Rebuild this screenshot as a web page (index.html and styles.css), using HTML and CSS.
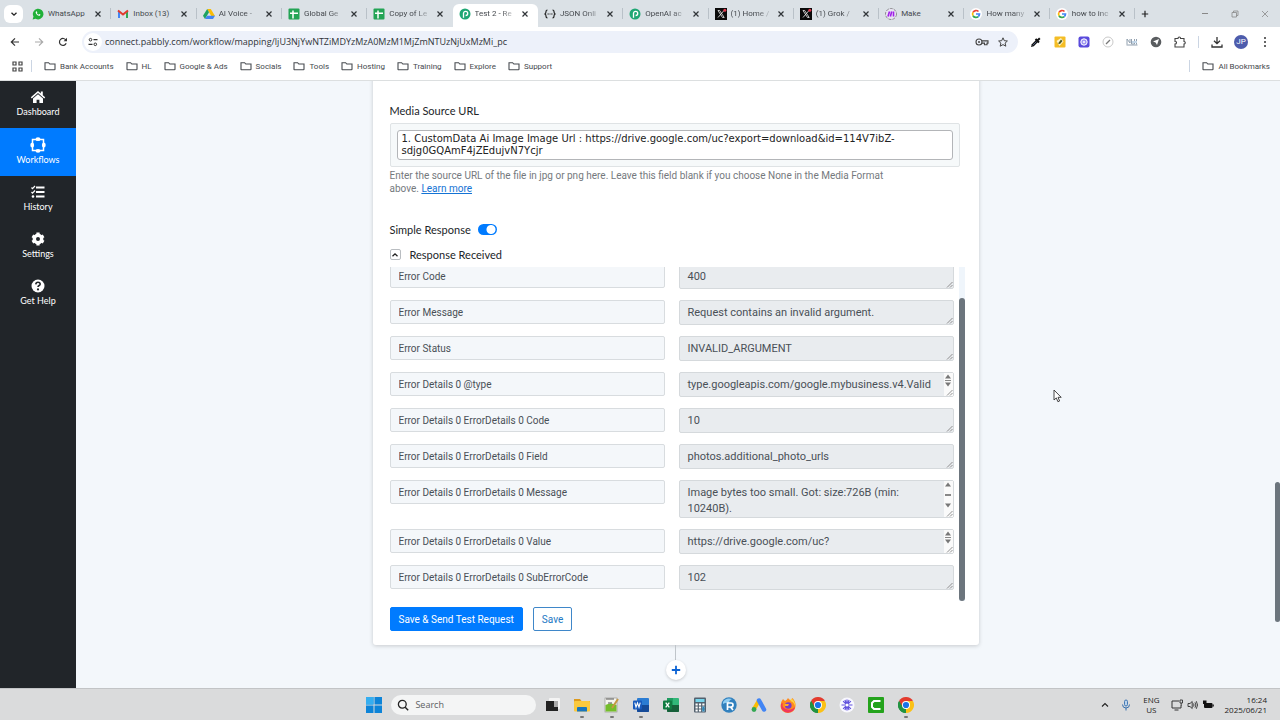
FILE: index.html
```html
<!DOCTYPE html>
<html lang="en">
<head>
<meta charset="utf-8">
<title>Test 2 - Response</title>
<link rel="stylesheet" href="styles.css">
</head>
<body>
<svg class="defs" aria-hidden="true">
  <symbol id="x" viewBox="0 0 8 8"><path d="M1.5 1.5l5 5M6.500 1.500l-5 5" stroke="currentColor" stroke-width="1.200" fill="none"/></symbol>
  <symbol id="folder" viewBox="0 0 12 10"><path d="M1 8.200V1.700h3.600l1.200 1.300H11v5.200q0 .6-.6.6H1.600q-.6 0-.6-.6z" fill="none" stroke="#474b50" stroke-width="1.100"/></symbol>
  <symbol id="sheet" viewBox="0 0 12 12"><rect width="11" height="11" x=".5" y=".5" rx="1" fill="#23a455"/><path d="M5 2.500v8M2 5.200h8" stroke="#fff" stroke-width="1.500"/></symbol>
  <symbol id="pabbly" viewBox="0 0 12 12"><circle cx="6" cy="6" r="5.500" fill="#1fa774"/><path d="M4.500 9.800V5.400a2.100 2.100 0 1 1 2.100 2.100" fill="none" stroke="#fff" stroke-width="1.300"/></symbol>
  <symbol id="xcom" viewBox="0 0 12 12"><rect width="12" height="12" fill="#0b0b0b"/><path d="M3 2.500h1.700L9.200 9.500H7.500zM9 2.500L3 9.500" fill="none" stroke="#eee" stroke-width=".8"/><circle cx="9.800" cy="2.300" r="1.500" fill="#e0364c"/></symbol>
  <symbol id="google" viewBox="0 0 12 12"><circle cx="6" cy="6" r="6" fill="#fff"/><g fill="none" stroke-width="1.700"><path d="M3 4.300A3.500 3.500 0 0 1 8.500 3.500" stroke="#ea4335"/><path d="M3 4.300A3.500 3.500 0 0 0 3 7.700" stroke="#fbbc05"/><path d="M3 7.700A3.500 3.500 0 0 0 8.300 8.600" stroke="#34a853"/><path d="M6 6h3.500A3.500 3.500 0 0 1 8.300 8.600" stroke="#4285f4"/></g></symbol>
  <symbol id="chrome" viewBox="0 0 16 16"><path d="M8 8L1.070 4A8 8 0 0 1 14.930 4z" fill="#e33b2e"/><path d="M8 8L14.930 4A8 8 0 0 1 8 16z" fill="#fbc116"/><path d="M8 8V16A8 8 0 0 1 1.070 4z" fill="#229342"/><path d="M8 4h6.930l-3.400 6z" fill="#fbc116"/><path d="M4.500 10L1.070 4 8 4z" fill="#e33b2e"/><path d="M1.070 4l3.430 6L8 12v4A8 8 0 0 1 1.070 4z" fill="#229342"/><circle cx="8" cy="8" r="4" fill="#fff"/><circle cx="8" cy="8" r="3.100" fill="#1a73e8"/></symbol>
  <symbol id="grip" viewBox="0 0 7 7"><path d="M1 6.500L6.500 1M4 6.500L6.500 4" stroke="#777" stroke-width=".8"/></symbol>
  <symbol id="up" viewBox="0 0 8 5"><path d="M4 .5L7 4.500H1z" fill="#777"/></symbol>
  <symbol id="down" viewBox="0 0 8 5"><path d="M4 4.500L7 .5H1z" fill="#777"/></symbol>
</svg>

<header class="browser">
  <div class="tabstrip">
    <button class="tab-search" aria-label="Search tabs"><svg width="8" height="8" viewBox="0 0 8 8"><path d="M1.500 2.700L4 5.200l2.500-2.500" fill="none" stroke="#222" stroke-width="1.300"/></svg></button>
    <div class="tabs">
      <div class="tab"><svg class="fav" viewBox="0 0 12 12"><path d="M.6 11.500l.9-2.900A5.300 5.300 0 1 1 3.600 10.700z" fill="#20b038"/><path d="M4 3.400q-1 1 .5 2.800t3.300 1.600l.8-1-1.400-.8-.6.700q-1.300-.6-1.800-1.700l.6-.6-.6-1.200z" fill="#fff"/></svg><span>WhatsApp</span><button aria-label="Close tab"><svg><use href="#x"/></svg></button></div>
      <div class="tab"><svg class="fav" viewBox="0 0 12 12"><path d="M1 2v8h2V5z" fill="#4285f4"/><path d="M11 2v8H9V5z" fill="#34a853"/><path d="M1 2.500L6 6.500l5-4" fill="none" stroke="#e33b2e" stroke-width="2.100"/></svg><span>Inbox (13)</span><button aria-label="Close tab"><svg><use href="#x"/></svg></button></div>
      <div class="tab"><svg class="fav" viewBox="0 0 12 12"><path d="M4.200 1h3.600L12 8H8.200z" fill="#fbbc04"/><path d="M4.200 1L6 4.300 2 11 0 7.800z" fill="#1ea362"/><path d="M2 11l2-3.300h8L10 11z" fill="#4285f4"/></svg><span>AI Voice -</span><button aria-label="Close tab"><svg><use href="#x"/></svg></button></div>
      <div class="tab"><svg class="fav"><use href="#sheet"/></svg><span>Global Ge</span><button aria-label="Close tab"><svg><use href="#x"/></svg></button></div>
      <div class="tab"><svg class="fav"><use href="#sheet"/></svg><span>Copy of Le</span><button aria-label="Close tab"><svg><use href="#x"/></svg></button></div>
      <div class="tab active"><svg class="fav"><use href="#pabbly"/></svg><span>Test 2 - Re</span><button aria-label="Close tab"><svg><use href="#x"/></svg></button></div>
      <div class="tab"><svg class="fav" viewBox="0 0 12 12"><path d="M3.500 2Q2 2 2 3.500T1 6q1 .5 1 2.200T3.500 10M8.500 2Q10 2 10 3.500T11 6q-1 .5-1 2.200T8.500 10M3.500 6h1.300M5.500 6h1M7.200 6h1.300" fill="none" stroke="#222" stroke-width="1.200"/></svg><span>JSON Onli</span><button aria-label="Close tab"><svg><use href="#x"/></svg></button></div>
      <div class="tab"><svg class="fav"><use href="#pabbly"/></svg><span>OpenAI ac</span><button aria-label="Close tab"><svg><use href="#x"/></svg></button></div>
      <div class="tab"><svg class="fav"><use href="#xcom"/></svg><span>(1) Home /</span><button aria-label="Close tab"><svg><use href="#x"/></svg></button></div>
      <div class="tab"><svg class="fav"><use href="#xcom"/></svg><span>(1) Grok /</span><button aria-label="Close tab"><svg><use href="#x"/></svg></button></div>
      <div class="tab"><svg class="fav" viewBox="0 0 12 12"><circle cx="6" cy="6" r="5.500" fill="#e9e4f3" stroke="#777" stroke-width=".8" stroke-dasharray="3 1"/><path d="M3 8.500L4.500 3.500M5.400 8.500L6.700 3.500M8.500 3.500v5" stroke="#a020e8" stroke-width="1.600"/></svg><span>Make</span><button aria-label="Close tab"><svg><use href="#x"/></svg></button></div>
      <div class="tab"><svg class="fav"><use href="#google"/></svg><span>How many</span><button aria-label="Close tab"><svg><use href="#x"/></svg></button></div>
      <div class="tab"><svg class="fav"><use href="#google"/></svg><span>how to inc</span><button aria-label="Close tab"><svg><use href="#x"/></svg></button></div>
    </div>
    <button class="new-tab" aria-label="New tab"><svg width="8" height="8" viewBox="0 0 8 8"><path d="M4 .8v6.400M.8 4h6.400" stroke="#222" stroke-width="1.200"/></svg></button>
    <div class="window-buttons">
      <button aria-label="Minimize"><svg width="8" height="8" viewBox="0 0 8 8"><path d="M1 3.500h6" stroke="#888"/></svg></button>
      <button aria-label="Restore"><svg width="8" height="8" viewBox="0 0 8 8"><path d="M1 2.500h4.500V7H1zM2.500 2.500V1H7v4.500H5.500" fill="none" stroke="#888" stroke-width=".8"/></svg></button>
      <button aria-label="Close"><svg width="8" height="8" viewBox="0 0 8 8"><path d="M1 1l6 6M7 1L1 7" stroke="#888" stroke-width=".8"/></svg></button>
    </div>
  </div>

  <div class="toolbar">
    <div class="nav">
      <button aria-label="Back"><svg width="10" height="10" viewBox="0 0 10 10"><path d="M9 5H1.500M5 1.300L1.300 5 5 8.700" fill="none" stroke="#333" stroke-width="1.200"/></svg></button>
      <button aria-label="Forward"><svg width="10" height="10" viewBox="0 0 10 10"><path d="M1 5h7.500M5 1.300L8.700 5 5 8.700" fill="none" stroke="#aaa" stroke-width="1.200"/></svg></button>
      <button aria-label="Reload"><svg width="10" height="10" viewBox="0 0 10 10"><path d="M8.200 6.300A3.500 3.500 0 1 1 8 3.200" fill="none" stroke="#333" stroke-width="1.200"/><path d="M9 .8v3.400H5.600z" fill="#333"/></svg></button>
    </div>
    <div class="omnibox">
      <button class="site-info" aria-label="Site information"><svg width="10" height="10" viewBox="0 0 10 10"><path d="M5.500 2.700H9.500M.5 7.300h4" stroke="#333" stroke-width="1.200"/><circle cx="2.500" cy="2.700" r="1.300" fill="none" stroke="#333"/><circle cx="7.300" cy="7.300" r="1.300" fill="none" stroke="#333"/></svg></button>
      <input type="text" aria-label="Address" value="connect.pabbly.com/workflow/mapping/ljU3NjYwNTZiMDYzMzA0MzM1MjZmNTUzNjUxMzMi_pc">
      <button aria-label="Passwords"><svg width="14" height="10" viewBox="0 0 14 10"><circle cx="4" cy="5" r="3" fill="none" stroke="#444" stroke-width="1.100"/><circle cx="4" cy="5" r="1" fill="#444"/><path d="M6.800 3.900H13v2.200h-1v1.700H9.500V6.100H6.800" fill="none" stroke="#444" stroke-width="1.100"/></svg></button>
      <button aria-label="Bookmark"><svg width="10" height="10" viewBox="0 0 10 10"><path d="M5 .8l1.300 2.900 3.100.3-2.300 2.100.7 3.100L5 7.600 2.200 9.200l.7-3.100L.6 4l3.100-.3z" fill="none" stroke="#444"/></svg></button>
    </div>
    <div class="extensions">
      <button aria-label="Color picker"><svg width="12" height="12" viewBox="0 0 12 12"><path d="M1 11l.8-2.800L6.200 3.800 8.200 5.800 3.800 10.200z" fill="#111"/><path d="M5.500 3l3.500 3.500M7.500 4.500L9.800 2.200" stroke="#111" stroke-width="2"/><path d="M2.700 9.300L6.400 5.600" stroke="#6a7fae" stroke-width=".7"/></svg></button>
      <button aria-label="Design extension"><svg width="12" height="12" viewBox="0 0 12 12"><rect x=".5" y=".5" width="11" height="11" rx="1" fill="#f4bd25"/><path d="M2.500 5L7 2l2.500 3.500-4 4.500z" fill="#fff5cd"/><path d="M4 7.500l3-4 1.500 1.500-2.500 3z" fill="#4f5c24"/></svg></button>
      <button aria-label="Recorder"><svg width="12" height="12" viewBox="0 0 12 12"><rect x=".5" y=".5" width="11" height="11" rx="2" fill="#5a4bdc"/><circle cx="6" cy="6" r="3.200" fill="#9f98f2" stroke="#fff"/><circle cx="6" cy="6" r="1" fill="#fff"/></svg></button>
      <button aria-label="Notes"><svg width="12" height="12" viewBox="0 0 12 12"><circle cx="6" cy="6" r="5" fill="#fff" stroke="#bbb" stroke-width=".8"/><path d="M4 8l4-4" stroke="#777" stroke-width="1.200"/></svg></button>
      <button aria-label="Metrics"><svg width="12" height="12" viewBox="0 0 12 12"><path d="M1 8.500V3l3 4V3M5.500 3v5h3V3M10.500 3v5.500M.5 9h11" fill="none" stroke="#91a0af"/><path d="M6 6h5" stroke="#c3d6e8" stroke-width="2"/></svg></button>
      <button aria-label="Send"><svg width="12" height="12" viewBox="0 0 12 12"><circle cx="6" cy="6" r="5.300" fill="#5a5d60"/><path d="M9 3L7 9 5.600 6.500 3 5.500z" fill="#fff"/></svg></button>
      <button aria-label="Extensions"><svg width="12" height="12" viewBox="0 0 12 12"><path d="M1 2.500h3q0-1.500 1.300-1.500t1.300 1.500H10v3q1.300.1 1.300 1.300T10 8.100V11H1V8q1.500 0 1.500-1.300T1 5.500z" fill="none" stroke="#444" stroke-width="1.100"/></svg></button>
      <i class="rule"></i>
      <button aria-label="Downloads"><svg width="12" height="12" viewBox="0 0 12 12"><path d="M6 1v6M3 4.700l3 3 3-3M1 8.500V11h10V8.500" fill="none" stroke="#333" stroke-width="1.300"/></svg></button>
      <button class="avatar">JP</button>
      <button aria-label="Menu"><svg width="12" height="12" viewBox="0 0 12 12"><g fill="#333"><circle cx="6" cy="2" r="1"/><circle cx="6" cy="6" r="1"/><circle cx="6" cy="10" r="1"/></g></svg></button>
    </div>
  </div>

  <nav class="bookmarks">
    <button class="apps" aria-label="Apps"><svg width="11" height="11" viewBox="0 0 11 11"><path d="M1 1h3v3H1zM7 1h3v3H7zM1 7h3v3H1zM7 7h3v3H7z" fill="none" stroke="#444" stroke-width="1.200"/></svg></button>
    <i class="rule"></i>
    <a href="#"><svg><use href="#folder"/></svg>Bank Accounts</a>
    <a href="#"><svg><use href="#folder"/></svg>HL</a>
    <a href="#"><svg><use href="#folder"/></svg>Google &amp; Ads</a>
    <a href="#"><svg><use href="#folder"/></svg>Socials</a>
    <a href="#"><svg><use href="#folder"/></svg>Tools</a>
    <a href="#"><svg><use href="#folder"/></svg>Hosting</a>
    <a href="#"><svg><use href="#folder"/></svg>Training</a>
    <a href="#"><svg><use href="#folder"/></svg>Explore</a>
    <a href="#"><svg><use href="#folder"/></svg>Support</a>
    <i class="rule push"></i>
    <a href="#"><svg><use href="#folder"/></svg>All Bookmarks</a>
  </nav>
</header>

<div class="app">
  <nav class="sidebar">
    <a href="#"><svg viewBox="0 0 16 16"><path d="M8 2L.8 8.300l1 1.100L8 4.100l6.200 5.300 1-1.100-2.400-2.100V2.500h-2v2z" fill="#fff"/><path d="M3 9.400L8 5.200l5 4.200V14H9.400v-3.300H6.600V14H3z" fill="#fff"/></svg>Dashboard</a>
    <a href="#" class="current"><svg viewBox="0 0 16 16"><rect x="2.500" y="2.500" width="11" height="11" fill="none" stroke="#fff" stroke-width="1.500"/><g fill="#fff"><ellipse cx="8" cy="2.200" rx="2.500" ry="1.900"/><ellipse cx="8" cy="13.800" rx="2.500" ry="1.900"/><ellipse cx="2.200" cy="8" rx="1.900" ry="2.500"/><ellipse cx="13.800" cy="8" rx="1.900" ry="2.500"/></g></svg>Workflows</a>
    <a href="#"><svg viewBox="0 0 16 16"><path d="M6 3.500h8.500M6 8h8.500M6 12.500h8.500" stroke="#fff" stroke-width="1.800"/><path d="M1.500 3.500l1 1.200L5 2M1.500 8l1 1.200L5 6.500" fill="none" stroke="#fff" stroke-width="1.200"/><circle cx="3" cy="12.500" r="1.300" fill="#fff"/></svg>History</a>
    <a href="#"><svg viewBox="0 0 16 16"><circle cx="8" cy="8" r="3.700" fill="none" stroke="#fff" stroke-width="3.400"/><path d="M8 1.500v3M8 11.500v3M2.400 4.800l2.500 1.500M11.100 9.700l2.500 1.500M2.400 11.200l2.500-1.500M11.100 6.300l2.500-1.500" stroke="#fff" stroke-width="3.200"/></svg>Settings</a>
    <a href="#"><svg viewBox="0 0 16 16"><circle cx="8" cy="8" r="6.500" fill="#fff"/><path d="M5.800 6.300Q6 4.200 8 4.200t2.200 1.700q0 1-1.100 1.600T8 9" fill="none" stroke="#212529" stroke-width="1.600"/><circle cx="8" cy="11.400" r="1.100" fill="#212529"/></svg>Get Help</a>
  </nav>

  <main class="canvas">
    <section class="card">
      <p class="hint">Select the way of attaching media.</p>
      <label class="field-label" for="media">Media Source URL</label>
      <div class="mapped"><textarea id="media" rows="2" readonly>1. CustomData Ai Image Image Url : https://drive.google.com/uc?export=download&amp;id=114V7ibZ-sdjg0GQAmF4jZEdujvN7Ycjr</textarea></div>
      <p class="hint">Enter the source URL of the file in jpg or png here. Leave this field blank if you choose None in the Media Format above. <a href="#">Learn more</a></p>
      <div class="toggle"><label for="simple">Simple Response</label><input type="checkbox" role="switch" id="simple" checked></div>
      <div class="received"><button aria-label="Collapse"><svg width="8" height="8" viewBox="0 0 8 8"><path d="M1.500 5.300L4 2.800l2.500 2.500" fill="none" stroke="#222" stroke-width="1.300"/></svg></button>Response Received</div>
      <div class="response">
        <div class="rows">
          <div class="row"><input aria-label="Key" value="Error Code" readonly><div class="value"><textarea aria-label="Error Code" readonly>400</textarea><svg class="grip"><use href="#grip"/></svg></div></div>
          <div class="row"><input aria-label="Key" value="Error Message" readonly><div class="value"><textarea aria-label="Error Message" readonly>Request contains an invalid argument.</textarea><svg class="grip"><use href="#grip"/></svg></div></div>
          <div class="row"><input aria-label="Key" value="Error Status" readonly><div class="value"><textarea aria-label="Error Status" readonly>INVALID_ARGUMENT</textarea><svg class="grip"><use href="#grip"/></svg></div></div>
          <div class="row"><input aria-label="Key" value="Error Details 0 @type" readonly><div class="value scrolls"><textarea aria-label="Error type" readonly>type.googleapis.com/google.mybusiness.v4.ValidationError</textarea><span class="mini"><svg><use href="#up"/></svg><i></i><svg><use href="#down"/></svg></span><svg class="grip"><use href="#grip"/></svg></div></div>
          <div class="row"><input aria-label="Key" value="Error Details 0 ErrorDetails 0 Code" readonly><div class="value"><textarea aria-label="Code" readonly>10</textarea><svg class="grip"><use href="#grip"/></svg></div></div>
          <div class="row"><input aria-label="Key" value="Error Details 0 ErrorDetails 0 Field" readonly><div class="value"><textarea aria-label="Field" readonly>photos.additional_photo_urls</textarea><svg class="grip"><use href="#grip"/></svg></div></div>
          <div class="row"><input aria-label="Key" value="Error Details 0 ErrorDetails 0 Message" readonly><div class="value scrolls tall"><textarea aria-label="Message" readonly>Image bytes too small. Got: size:726B (min: 10240B).</textarea><span class="mini"><svg><use href="#up"/></svg><i></i><svg><use href="#down"/></svg></span><svg class="grip"><use href="#grip"/></svg></div></div>
          <div class="row"><input aria-label="Key" value="Error Details 0 ErrorDetails 0 Value" readonly><div class="value scrolls"><textarea aria-label="Value" readonly>https://drive.google.com/uc?export=download&amp;id=114V7ibZ-sdjg0GQAmF4jZEdujvN7Ycjr</textarea><span class="mini"><svg><use href="#up"/></svg><i></i><svg><use href="#down"/></svg></span><svg class="grip"><use href="#grip"/></svg></div></div>
          <div class="row"><input aria-label="Key" value="Error Details 0 ErrorDetails 0 SubErrorCode" readonly><div class="value"><textarea aria-label="SubErrorCode" readonly>102</textarea><svg class="grip"><use href="#grip"/></svg></div></div>
        </div>
        <div class="track"><i></i></div>
      </div>
      <div class="actions"><button class="btn primary">Save &amp; Send Test Request</button><button class="btn">Save</button></div>
    </section>
    <i class="connector"></i>
    <button class="add" aria-label="Add step"><svg width="10" height="10" viewBox="0 0 10 10"><path d="M5 .8v8.400M.8 5h8.400" stroke="#0c63d4" stroke-width="1.800"/></svg></button>
  </main>
  <div class="page-track"><i></i></div>
  <svg class="cursor" width="9" height="14" viewBox="0 0 9 14"><path d="M1 1v10l2.300-2.100 1.600 3.800 1.700-.7-1.600-3.700h3.200z" fill="#fff" stroke="#333" stroke-width=".9"/></svg>
</div>

<footer class="taskbar">
  <div class="pinned">
    <button aria-label="Start"><svg viewBox="0 0 16 16"><path d="M0 0h7.500v7.500H0zM8.500 0H16v7.500H8.500zM0 8.500h7.500V16H0zM8.500 8.500H16V16H8.500z" fill="#0d84d8"/><path d="M0 0h7.500v7.500H0z" fill="#35aef0"/></svg></button>
    <label class="search"><svg width="12" height="12" viewBox="0 0 12 12"><circle cx="5.300" cy="5.300" r="3.900" fill="none" stroke="#222" stroke-width="1.300"/><path d="M8.200 8.200l3 3" stroke="#222" stroke-width="1.400"/></svg><input type="text" placeholder="Search" aria-label="Search"></label>
    <button aria-label="Task view"><svg viewBox="0 0 16 16"><rect x="4" y="1" width="11" height="11" rx="1" fill="#f4f4f4"/><path d="M1 4h8v6h4v4H1z" fill="#222"/><path d="M9 4h4v6H9z" fill="#aaa"/></svg></button>
    <button aria-label="File Explorer" class="open"><svg viewBox="0 0 16 16"><path d="M0 2h6l1.500 2H16v3H0z" fill="#dd9a1d"/><rect y="4" width="16" height="10.500" rx="1" fill="#fbc93d"/><path d="M3 14.500V11q0-1 1-1h8q1 0 1 1v3.500z" fill="#1976bd"/></svg></button>
    <button aria-label="Notepad++" class="open"><svg viewBox="0 0 16 16"><rect x="1" y="1" width="12" height="14" fill="#f4f4ee" stroke="#999" stroke-width=".7"/><path d="M1.500 8q5-3 11 0v6.500h-11z" fill="#74bd2c"/><path d="M3 1v2M5 1v2M7 1v2M9 1v2M4 6h4" stroke="#555"/><path d="M8 11l6-9" stroke="#c49843" stroke-width="2"/></svg></button>
    <button aria-label="Word" class="open"><svg viewBox="0 0 16 16"><rect x="4" y="1" width="12" height="14" rx="1" fill="#2b7cd3"/><path d="M4 8h12v6q0 1-1 1H5q-1 0-1-1z" fill="#154a98"/><rect y="3.500" width="9" height="9" rx="1" fill="#185abd"/><path d="M1.800 5.700l1.200 4.500L4.500 6l1.500 4.200 1.200-4.500" fill="none" stroke="#fff" stroke-width="1.100"/></svg></button>
    <button aria-label="Excel"><svg viewBox="0 0 16 16"><rect x="4" y="1" width="12" height="14" rx="1" fill="#32b779"/><path d="M4 8h12v6q0 1-1 1H5q-1 0-1-1z" fill="#17603a"/><path d="M4 1h6v7H4z" fill="#1f9c60"/><rect y="3.500" width="9" height="9" rx="1" fill="#107c41"/><path d="M2.700 5.700l3.600 4.600M6.300 5.700l-3.600 4.600" stroke="#fff" stroke-width="1.300"/></svg></button>
    <button aria-label="Calculator"><svg viewBox="0 0 16 16"><rect x="2" y=".5" width="12" height="15" rx="1" fill="#53616e"/><rect x="3.500" y="2" width="9" height="3" fill="#77d4eb"/><path d="M3.500 7.500h9M3.500 10.500h9M3.500 13.500h9" stroke="#fff" stroke-width="2" stroke-dasharray="2.200 1.200"/><path d="M10.300 9.500h2.200v5h-2.200z" fill="#2e89ba"/></svg></button>
    <button aria-label="RoboForm"><svg viewBox="0 0 16 16"><circle cx="8" cy="8" r="7.700" fill="#3281be"/><path d="M2 5q3-5 9-3Q8 3 8 6q-3-1-6 1z" fill="#8fcdf2"/><path d="M6.500 13V6H10q2 0 2 2t-2 2H6.500M9.500 10l2.500 3" fill="none" stroke="#fff" stroke-width="1.700"/></svg></button>
    <button aria-label="Google Ads"><svg viewBox="0 0 16 16"><path d="M8 3.500L3 12" stroke="#fbbc04" stroke-width="4"/><path d="M8 3.500l5 9" stroke="#4285f4" stroke-width="4.500" stroke-linecap="round"/><circle cx="3" cy="12.500" r="2.400" fill="#34a853"/></svg></button>
    <button aria-label="Firefox"><svg viewBox="0 0 16 16"><path d="M3 2l2 2q2-1 3-3 1 2 3 2l1.500-2Q16 5 15.500 9A7.500 7 0 0 1 .5 9Q.4 5 3 2z" fill="#ff8a1e"/><path d="M1 7q-.5 8 7 8.700Q14 15 15 10q-4 4-9 2T3 6z" fill="#f0375c"/><path d="M11.500 1.500Q16 5 15.200 10q-1-5-5-6z" fill="#ffd43d"/><circle cx="8.300" cy="8.500" r="3.300" fill="#7b3bc8"/><path d="M5 7h4l-1 2H5z" fill="#ffad24"/></svg></button>
    <button aria-label="Chrome"><svg><use href="#chrome"/></svg></button>
    <button aria-label="Recorder"><svg viewBox="0 0 16 16"><circle cx="8" cy="8" r="7.500" fill="#f8f8ff"/><path d="M8 2.500v11M2.500 8h11M4.100 4.100l7.800 7.800M11.900 4.100l-7.800 7.800M5.900 2.900l4.200 10.200M10.100 2.900L5.900 13.100" stroke="#6253de" stroke-width="1.200"/><circle cx="8" cy="8" r="1.500" fill="#fff"/></svg></button>
    <button aria-label="Camtasia"><svg viewBox="0 0 16 16"><rect width="16" height="16" rx="1" fill="#24a31c"/><path d="M12.500 4H6L4 6v4l2 2h6.500" fill="none" stroke="#fff" stroke-width="2"/></svg></button>
    <button aria-label="Chrome window" class="open"><svg><use href="#chrome"/></svg></button>
  </div>
  <div class="tray">
    <button aria-label="Hidden icons"><svg width="8" height="8" viewBox="0 0 8 8"><path d="M1 5.500l3-3 3 3" fill="none" stroke="#222" stroke-width="1.100"/></svg></button>
    <button class="mic" aria-label="Microphone"><svg width="10" height="12" viewBox="0 0 10 12"><rect x="3.500" y="1" width="3" height="6" rx="1.500" fill="#b9d2ec" stroke="#356fae" stroke-width=".9"/><path d="M1.500 5.500a3.500 3.500 0 0 0 7 0M5 9v2.500" fill="none" stroke="#356fae"/></svg></button>
    <button class="lang">ENG<br>US</button>
    <button aria-label="Network"><svg width="12" height="12" viewBox="0 0 12 12"><path d="M8 2H1v7h9V6.500M3.500 11h4" fill="none" stroke="#333"/><path d="M9 1h2.500v3H9zM10.200 4v3" fill="none" stroke="#333" stroke-width=".9"/></svg></button>
    <button aria-label="Volume"><svg width="11" height="12" viewBox="0 0 11 12"><path d="M1 4.500h2l2.200-2v7L3 7.500H1zM6.500 4.500q1 1.500 0 3M8 3.300q1.800 2.700 0 5.400M9.300 2.200q2.500 3.800 0 7.600" fill="none" stroke="#333" stroke-width=".9"/></svg></button>
    <button aria-label="Battery"><svg width="12" height="12" viewBox="0 0 12 12"><rect x="2" y="4" width="8.500" height="5" rx="1" fill="#111"/><path d="M10.500 5.500h1.300v2h-1.300zM1 1.500h3.500v3.500H1z" fill="#111"/></svg></button>
    <button class="clock">16:24<br>2025/06/21</button>
  </div>
</footer>
</body>
</html>
```
FILE: styles.css
```css
* { box-sizing: border-box; }
html, body { height: 100%; }
body { margin: 0; display: flex; flex-direction: column; overflow: hidden; font-family: Roboto, sans-serif; font-size: 10px; color: #212529; background: #fff; }
button { margin: 0; padding: 0; border: 0; background: none; font: inherit; color: inherit; display: inline-flex; align-items: center; justify-content: center; flex: none; }
input, textarea { font: inherit; color: inherit; margin: 0; border: 0; outline: 0; min-width: 0; }
p { margin: 0; }
svg { flex: none; display: block; }
.defs { position: absolute; width: 0; height: 0; }

/* Browser frame */
.browser { flex: none; font-family: Roboto, sans-serif; font-size: 8px; color: #45494e; background: #fff; border-bottom: 1px solid #dcdfe0; }
.tabstrip { display: flex; align-items: center; height: 27px; padding-left: 4px; background: #dbe1e6; }
.tab-search { width: 19px; height: 18px; background: #fff; border-radius: 6px; margin-right: 3px; }
.tabs { display: flex; flex: 1; min-width: 0; align-self: stretch; padding-top: 4px; }
.tab { flex: 1 1 0; min-width: 0; display: flex; align-items: center; padding: 0 9px 4px 6px; position: relative; }
.tab::after { content: ""; position: absolute; right: 0; top: 4px; height: 11px; width: 1px; background: #b9c1c8; }
.tab.active::after, .tab:has(+ .active)::after { display: none; }
.tab.active { background: #fff; border-radius: 6px 6px 0 0; }
.fav { width: 12px; height: 12px; margin-right: 4px; }
.tab span { flex: 1; min-width: 0; overflow: hidden; white-space: nowrap; mask-image: linear-gradient(to right, #000 65%, transparent 105%); }
.tab:first-child span, .tab:nth-child(2) span, .tab:nth-child(11) span { mask-image: none; }
.tab button { width: 8px; height: 8px; margin-left: 6px; color: #303438; }
.tab button svg { width: 8px; height: 8px; }
.new-tab { width: 20px; }
.window-buttons { display: flex; margin-left: 35px; }
.window-buttons button { width: 30px; }
.toolbar { display: flex; align-items: center; height: 29px; }
.nav { display: flex; gap: 14px; padding: 0 14px 0 10px; }
.omnibox { flex: 1; display: flex; align-items: center; height: 22px; border-radius: 11px; background: #edf1fa; padding: 0 10px 0 2px; gap: 9px; }
.omnibox input { flex: 1; background: none; padding: 0; font-family: "Open Sans", sans-serif; font-size: 9px; color: #303439; margin-left: -6px; }
.site-info { width: 18px; height: 18px; border-radius: 9px; background: #fff; }
.extensions { display: flex; align-items: center; gap: 12px; padding: 0 9px 0 12px; }
.rule { width: 1px; height: 12px; background: #cbd5e3; }
.avatar { width: 14px; height: 14px; border-radius: 7px; background: #4d5cac; color: #fff; margin: 0 -1px; }
.bookmarks { display: flex; align-items: center; gap: 12px; height: 24px; padding: 0 10px 4px 12px; }
.bookmarks a { display: flex; align-items: center; gap: 4px; color: inherit; text-decoration: none; white-space: nowrap; }
.bookmarks a svg { width: 12px; height: 10px; }
.bookmarks .apps { margin-right: -4px; }
.push { margin-left: auto; }

/* Application */
.app { flex: 1; min-height: 0; display: flex; position: relative; overflow: hidden; background: #f3f7fb; }
.sidebar { flex: none; width: 76px; background: #212529; font-family: Lato, sans-serif; font-size: 9px; }
.sidebar a { display: flex; flex-direction: column; align-items: center; height: 47px; padding-top: 8px; color: #fff; text-decoration: none; line-height: 14px; }
.sidebar a.current { height: 48px; padding-top: 9px; background: #007bff; }
.sidebar svg { width: 16px; height: 16px; }
.canvas { flex: 1; display: flex; flex-direction: column; align-items: center; justify-content: flex-end; padding-bottom: 8px; }
.card { flex: none; width: 100%; max-width: 606px; padding: 0 17px 14px; background: #fff; border-radius: 3px; box-shadow: 0 1px 4px rgba(0, 0, 0, .18); }
.hint { color: #75797d; line-height: 13px; padding-right: 50px; }
.hint a { color: #1473d4; }
.field-label { display: block; margin: 23px 0 6px; line-height: 12px; }
.mapped { width: 570px; max-width: 100%; padding: 6px; background: #f6f9fa; border: 1px solid #dfe3e5; border-radius: 2px; margin-bottom: 2px; }
.mapped textarea { display: block; width: 100%; padding: 2px 4px; border: 1px solid #b3b5b8; border-radius: 3px; background: #fff; resize: none; overflow: hidden; font-family: "DejaVu Sans", sans-serif; font-size: 10px; line-height: 12px; color: #222; }
.toggle { display: flex; align-items: center; gap: 7px; margin-top: 28px; height: 13px; }
.toggle input { appearance: none; width: 19px; height: 11px; border-radius: 6px; background: radial-gradient(circle at 13px 50%, #fff 4px, transparent 5px), #007bff; }
.received { display: flex; align-items: center; gap: 9px; margin: 12px 0 6px; height: 13px; }
.received button { width: 11px; height: 11px; border: 1px solid #b9bdc1; border-radius: 2px; }
.field-label, .toggle, .received { font-family: Lato, sans-serif; font-size: 11px; }
.response { display: flex; gap: 5px; height: 334px; margin-right: -3px; }
.rows { flex: 1; display: flex; flex-direction: column; justify-content: flex-end; gap: 11px; padding-bottom: 11px; overflow: hidden; }
.row { flex: none; display: grid; grid-template-columns: 1fr 1fr; gap: 14px; align-items: start; color: #495057; }
.row input { width: 100%; height: 24px; padding: 0 8px; background: #f4f7fa; border: 1px solid #d8dcdf; border-radius: 2px; }
.value { position: relative; height: 25px; font-size: 11px; }
.value textarea { display: block; width: 100%; height: 100%; padding: 4px 8px 0; background: #e9ecef; border: 1px solid #d5d9dc; border-radius: 2px; resize: none; overflow: hidden; line-height: 16px; }
.value.tall { height: 38px; }
.scrolls textarea { padding-right: 20px; word-break: break-word; }
.grip { position: absolute; right: 1px; bottom: 1px; width: 7px; height: 7px; }
.mini { position: absolute; right: 1px; top: 1px; bottom: 1px; width: 9px; padding: 1px 0 9px; background: #fafafa; display: flex; flex-direction: column; align-items: center; justify-content: space-between; }
.mini svg { width: 8px; height: 5px; }
.mini i { width: 6px; height: 1px; background: #888; }
.tall .mini i { height: 2px; }
.track { width: 6px; background: #eff5fb; padding-top: 31px; }
.track i { display: block; height: 100%; background: #6c757d; border-radius: 3px; }
.actions { display: flex; gap: 10px; margin-top: 6px; }
.btn { height: 24px; padding: 0 8px; border: 1px solid #3f87c9; border-radius: 2px; color: #2378c4; }
.btn.primary { background: #007bff; border-color: #007bff; color: #fff; }
.connector { flex: none; width: 1px; height: 15px; background: #bfc5ca; }
.add { width: 20px; height: 20px; border-radius: 10px; background: #fff; box-shadow: 0 1px 3px rgba(0, 0, 0, .18); }
.page-track { flex: none; width: 5px; padding-top: 401px; }
.page-track i { display: block; height: 140px; background: #6c757d; border-radius: 3px; }
.cursor { position: absolute; left: 1053px; top: 308px; }

/* Taskbar */
.taskbar { flex: none; display: grid; grid-template-columns: 1fr auto 1fr; align-items: center; height: 32px; border-top: 1px solid #c2c4c6; background: #dadbdc; font-family: "Open Sans", "Noto Sans", sans-serif; font-size: 8px; color: #222; }
.pinned { grid-column: 2; display: flex; align-items: center; justify-content: space-between; width: 548px; }
.pinned button { position: relative; width: 16px; height: 16px; }
.pinned button svg { width: 16px; height: 16px; }
.pinned button:first-child { margin-right: -4px; }
.open::after { content: ""; position: absolute; left: 6px; top: 19px; width: 4px; height: 2px; border-radius: 1px; background: #777; }
.search { display: flex; align-items: center; gap: 6px; width: 145px; height: 20px; padding: 0 6px; margin-right: -5px; border-radius: 10px; background: #f4f5f5; font-size: 9px; }
.search input { flex: 1; padding: 0; background: none; }
.search input::placeholder { color: #5c5f62; opacity: 1; }
.tray { grid-column: 3; display: flex; align-items: center; justify-content: flex-end; gap: 4px; padding-right: 13px; line-height: 10px; }
.mic { margin: 0 8px; }
.lang { display: block; text-align: center; margin-right: 7px; }
.clock { display: block; text-align: right; margin-left: 7px; }
```
